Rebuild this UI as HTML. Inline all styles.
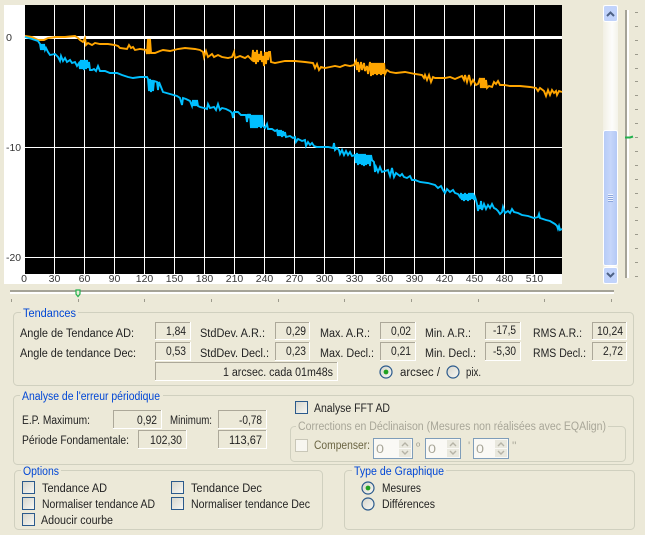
<!DOCTYPE html>
<html><head><meta charset="utf-8"><style>
html,body{margin:0;padding:0;background:#ECE9D8;width:645px;height:535px;overflow:hidden}
svg{display:block}
text{font-family:"Liberation Sans",sans-serif;font-size:11.5px;fill:#222;white-space:pre}
.l{fill:#0046D5}
.g{fill:#A8A698}
.a{font-size:10.5px;fill:#333}
.b{fill:none;stroke:#D0D0BF}
.c{fill:url(#cb);stroke:#2B5A8C}
.r{fill:url(#cb);stroke:#2B5A8C;stroke-width:1.2}
.t{stroke:#9c9a8c;fill:none}
</style></head><body>
<svg width="645" height="535" viewBox="0 0 645 535" xmlns="http://www.w3.org/2000/svg">
<defs>
<linearGradient id="cb" x1="0" y1="0" x2="1" y2="1"><stop offset="0" stop-color="#D6D5CB"/><stop offset="1" stop-color="#F8F8F4"/></linearGradient>
<linearGradient id="tr" x1="0" y1="0" x2="1" y2="0"><stop offset="0" stop-color="#F1EFE4"/><stop offset=".6" stop-color="#FDFDFB"/><stop offset="1" stop-color="#F4F3EA"/></linearGradient>
<linearGradient id="th" x1="0" y1="0" x2="1" y2="0"><stop offset="0" stop-color="#B6CBF7"/><stop offset=".5" stop-color="#C6D6FA"/><stop offset="1" stop-color="#B3C8F5"/></linearGradient>
</defs>
<rect width="645" height="535" fill="#ECE9D8"/>

<!-- chart -->
<rect x="4" y="5" width="558" height="279" fill="#fff"/>
<rect x="25" y="5" width="537" height="269" fill="#000"/>
<g stroke="#fff" shape-rendering="crispEdges">
<path d="M54.5 5V274M84.5 5V274M114.5 5V274M144.5 5V274M174.5 5V274M204.5 5V274M234.5 5V274M264.5 5V274M294.5 5V274M324.5 5V274M354.5 5V274M384.5 5V274M414.5 5V274M444.5 5V274M474.5 5V274M504.5 5V274M534.5 5V274"/>
<path d="M25 147.5H562M25 257.5H562"/>
<path d="M25 37.5H562" stroke-width="3"/>
</g>
<g fill="none" stroke-width="1.9" stroke-linejoin="miter">
<path stroke="#FFA500" d="M25 36L32 37L38 40L44 40L48 38L56 37L65 37L75 36L78 38L80 40L83 42L85 38L86 45L88 43L92 45L95 43L100 44L108 44L115 45L118 46L120 48L127 49L129 45L131 48L133 47L135 50L140 49L146 50L147 54L148 39L149 54L150 39L151 53L155 53L160 51L163 50L170 51L178 49L185 48L195 49L200 50L203 52L204 57L206 51L208 57L212 54L214 57L218 55L222 57L228 58L232 57L234 52L235 58L240 56L245 58L248 56L252 60L253 50L254 62L255 52L256 64L257 50L258 62L259 54L260 60L261 51L262 62L263 56L264 66L265 52L266 64L267 52L268 60L269 52L270 52L271 62L275 63L285 61L295 61L305 62L313 63L315 68L317 64L319 70L321 67L325 68L330 67L335 66L340 67L345 65L350 66L354 65L356 61L357 70L358 62L359 72L361 62L362 70L364 63L365 71L367 66L368 74L370 62L371 76L372 63L373 75L374 63L375 74L376 63L377 75L378 63L379 74L380 63L381 75L382 63L383 74L384 63L385 74L387 70L390 72L396 73L405 72L415 74L422 75L424 78L425 75L427 80L429 75L431 82L433 77L435 78L445 78L450 77L455 79L462 76L464 80L465 75L467 82L469 75L471 84L473 80L476 85L478 84L480 78L481 88L482 78L483 88L484 78L485 88L486 80L487 88L489 86L492 87L494 82L496 84L498 81L500 85L504 85L510 86L520 86L530 87L536 88L538 91L540 88L544 91L546 96L548 90L550 95L552 90L554 93L556 91L557 95L559 91L562 92"/>
<path stroke="#00BFFF" d="M25 37L32 39L38 41L40 44L41 50L42 44L43 50L44 44L45 50L46 48L48 52L50 55L55 54L58 57L60 61L61 56L63 61L65 58L67 62L70 60L72 63L75 62L77 66L79 63L80 69L81 60L82 69L83 60L84 70L85 60L86 69L87 60L88 68L89 62L90 70L92 70L94 69L96 71L98 66L100 71L105 71L110 73L117 73L122 75L128 77L133 78L140 77L147 77L148 79L149 91L150 79L151 92L152 80L153 91L154 81L157 82L158 90L159 82L161 87L163 92L170 94L177 96L180 98L182 105L183 98L186 99L190 101L192 106L193 100L194 106L195 100L196 106L197 100L198 106L200 107L204 108L207 109L208 104L210 108L214 107L216 110L218 104L220 110L222 108L226 109L230 111L232 113L233 118L234 112L238 112L241 115L244 115L246 115L247 122L248 114L249 118L250 114L251 128L252 115L253 128L254 115L255 128L256 115L257 128L258 115L259 127L260 115L261 128L262 115L263 126L265 128L267 124L268 129L272 129L275 131L277 130L278 136L279 130L280 136L281 130L282 137L283 131L284 136L285 132L286 137L290 136L293 138L295 137L296 142L298 139L302 141L305 140L306 146L308 142L310 145L312 143L314 146L317 147L322 147L328 147L333 148L334 143L335 150L337 148L339 150L340 154L342 150L344 155L346 151L348 155L350 152L352 156L355 155L356 163L357 153L358 165L359 154L360 164L361 154L362 165L363 154L364 166L365 154L366 165L367 155L368 164L369 155L370 166L371 155L372 160L374 162L375 172L376 167L378 172L380 167L382 172L385 171L388 170L390 176L392 168L394 177L396 173L400 176L402 174L404 177L407 178L410 176L412 180L415 180L420 182L428 183L435 185L438 188L441 186L443 190L445 193L447 189L450 192L453 190L455 193L458 194L460 197L461 193L462 200L463 194L464 201L465 193L466 200L467 194L468 201L469 193L470 200L471 193L472 199L473 193L474 200L475 197L476 200L477 204L478 211L479 205L480 209L481 201L482 210L484 204L486 209L488 205L490 208L492 204L494 208L496 209L498 211L500 214L502 212L503 207L505 213L508 211L510 213L512 209L514 212L518 213L522 215L528 216L534 218L538 217L539 214L540 218L546 220L550 221L555 224L557 226L558 229L559 226L560 230L562 229"/>
</g>

<text class="a" x="6" y="41" textLength="6" lengthAdjust="spacingAndGlyphs">0</text>
<text class="a" x="6" y="151" textLength="15" lengthAdjust="spacingAndGlyphs">-10</text>
<text class="a" x="6" y="261" textLength="15" lengthAdjust="spacingAndGlyphs">-20</text>
<g text-anchor="middle">
<text class="a" x="24" y="282">0</text><text class="a" x="54.5" y="282">30</text><text class="a" x="84.5" y="282">60</text><text class="a" x="114.5" y="282">90</text><text class="a" x="144.5" y="282">120</text><text class="a" x="174.5" y="282">150</text><text class="a" x="204.5" y="282">180</text><text class="a" x="234.5" y="282">210</text><text class="a" x="264.5" y="282">240</text><text class="a" x="294.5" y="282">270</text><text class="a" x="324.5" y="282">300</text><text class="a" x="354.5" y="282">330</text><text class="a" x="384.5" y="282">360</text><text class="a" x="414.5" y="282">390</text><text class="a" x="444.5" y="282">420</text><text class="a" x="474.5" y="282">450</text><text class="a" x="504.5" y="282">480</text><text class="a" x="534.5" y="282">510</text>
</g>

<!-- vertical scrollbar -->
<rect x="603" y="5" width="15" height="279" fill="url(#tr)"/>
<rect x="603.5" y="5.5" width="14" height="16" rx="2" fill="#C1D3FB" stroke="#fff"/>
<path d="M607 16L610.5 12.5L614 16" fill="none" stroke="#4D6185" stroke-width="2"/>
<rect x="603.5" y="130.5" width="14" height="135" rx="2" fill="url(#th)" stroke="#fff"/>
<path d="M608 194.5H613M608 196.5H613M608 198.5H613M608 200.5H613" stroke="#EEF3FE"/>
<path d="M608 195.5H613M608 197.5H613M608 199.5H613M608 201.5H613" stroke="#8CA6DC"/>
<rect x="603.5" y="267.5" width="14" height="16" rx="2" fill="#C1D3FB" stroke="#fff"/>
<path d="M607 273L610.5 276.5L614 273" fill="none" stroke="#4D6185" stroke-width="2"/>

<!-- vertical slider -->
<rect x="625" y="10" width="2" height="268" fill="#A5A397"/>
<rect x="627" y="10" width="2" height="268" fill="#fff"/>
<path d="M625 137.5H630L633 136.5" stroke="#21B14C" stroke-width="2" fill="none"/>
<path class="t" d="M635 12.5H638M635 26.5H638M635 40.5H638M635 54.5H638M635 68.5H638M635 81.5H638M635 95.5H638M635 109.5H638M635 123.5H638M635 137.5H638M635 151.5H638M635 165.5H638M635 179.5H638M635 193.5H638M635 207.5H638M635 220.5H638M635 234.5H638M635 248.5H638M635 262.5H638M635 276.5H638"/>

<!-- horizontal slider -->
<rect x="10" y="290" width="604" height="2" fill="#A5A397"/>
<rect x="10" y="292" width="604" height="2" fill="#fff"/>
<path d="M76 290H80V294L78 296.5L76 294Z" fill="#ECE9D8" stroke="#21B14C" stroke-width="1.2"/>
<path class="t" d="M11.5 299V302M78.5 299V302M144.5 299V302M211.5 299V302M278.5 299V302M344.5 299V302M411.5 299V302M478.5 299V302M544.5 299V302M611.5 299V302"/>

<!-- group boxes -->
<rect class="b" x="13.5" y="312.5" width="620" height="73" rx="4"/>
<rect class="b" x="13.5" y="395.5" width="620" height="69" rx="4"/>
<rect class="b" x="290.5" y="426.5" width="335" height="35" rx="4"/>
<rect class="b" x="14.5" y="470.5" width="308" height="59" rx="4"/>
<rect class="b" x="344.5" y="470.5" width="290" height="59" rx="4"/>
<g fill="#ECE9D8">
<rect x="21" y="306" width="57" height="12"/>
<rect x="20" y="389" width="143" height="12"/>
<rect x="296" y="421" width="312" height="12"/>
<rect x="21" y="465" width="40" height="12"/>
<rect x="352" y="465" width="94" height="12"/>
</g>
<text class="l" x="23" y="317" textLength="53" lengthAdjust="spacingAndGlyphs">Tendances</text>
<text class="l" x="22" y="400" textLength="138" lengthAdjust="spacingAndGlyphs">Analyse de l'erreur périodique</text>
<text class="l" x="23" y="475" textLength="36" lengthAdjust="spacingAndGlyphs">Options</text>
<text class="l" x="354" y="475" textLength="90" lengthAdjust="spacingAndGlyphs">Type de Graphique</text>
<text class="g" x="298" y="430" textLength="308" lengthAdjust="spacingAndGlyphs">Corrections en Déclinaison (Mesures non réalisées avec EQAlign)</text>

<!-- sunken fields -->
<g fill="none" shape-rendering="crispEdges">
<path stroke="#ACA899" d="M155.5 340V322.5H191M155.5 361V342.5H191M155.5 381V362.5H338M275.5 340V322.5H310M275.5 361V342.5H310M380.5 340V322.5H416M380.5 361V342.5H416M485.5 340V322.5H521M485.5 361V342.5H521M592.5 340V322.5H627M592.5 361V342.5H627M113.5 429V410.5H162M218.5 429V410.5H267M138.5 449V430.5H187M218.5 449V430.5H267"/>
<path stroke="#fff" d="M190.5 322V339.5H155M190.5 342V360.5H155M337.5 362V380.5H155M309.5 322V339.5H275M309.5 342V360.5H275M415.5 322V339.5H380M415.5 342V360.5H380M520.5 322V339.5H485M520.5 342V360.5H485M626.5 322V339.5H592M626.5 342V360.5H592M161.5 410V428.5H113M266.5 410V428.5H218M186.5 430V448.5H138M266.5 430V448.5H218"/>
</g>

<!-- Tendances -->
<text x="20" y="337" textLength="114" lengthAdjust="spacingAndGlyphs">Angle de Tendance AD:</text>
<text x="20" y="357" textLength="116" lengthAdjust="spacingAndGlyphs">Angle de tendance Dec:</text>
<text x="200" y="337" textLength="65" lengthAdjust="spacingAndGlyphs">StdDev. A.R.:</text>
<text x="200" y="357" textLength="69" lengthAdjust="spacingAndGlyphs">StdDev. Decl.:</text>
<text x="320" y="337" textLength="50" lengthAdjust="spacingAndGlyphs">Max. A.R.:</text>
<text x="320" y="357" textLength="54" lengthAdjust="spacingAndGlyphs">Max. Decl.:</text>
<text x="425" y="337" textLength="46" lengthAdjust="spacingAndGlyphs">Min. A.R.:</text>
<text x="425" y="357" textLength="51" lengthAdjust="spacingAndGlyphs">Min. Decl.:</text>
<text x="533" y="337" textLength="49" lengthAdjust="spacingAndGlyphs">RMS A.R.:</text>
<text x="533" y="357" textLength="53" lengthAdjust="spacingAndGlyphs">RMS Decl.:</text>
<text x="166" y="335" textLength="20" lengthAdjust="spacingAndGlyphs">1,84</text>
<text x="166" y="355" textLength="20" lengthAdjust="spacingAndGlyphs">0,53</text>
<text x="286" y="335" textLength="20" lengthAdjust="spacingAndGlyphs">0,29</text>
<text x="286" y="355" textLength="20" lengthAdjust="spacingAndGlyphs">0,23</text>
<text x="391" y="335" textLength="20" lengthAdjust="spacingAndGlyphs">0,02</text>
<text x="391" y="355" textLength="20" lengthAdjust="spacingAndGlyphs">0,21</text>
<text x="493" y="334" textLength="23" lengthAdjust="spacingAndGlyphs">-17,5</text>
<text x="493" y="355" textLength="23" lengthAdjust="spacingAndGlyphs">-5,30</text>
<text x="597" y="335" textLength="26" lengthAdjust="spacingAndGlyphs">10,24</text>
<text x="603" y="355" textLength="20" lengthAdjust="spacingAndGlyphs">2,72</text>
<text x="223" y="376" textLength="110" lengthAdjust="spacingAndGlyphs">1 arcsec. cada 01m48s</text>
<circle class="r" cx="386" cy="372" r="6"/><circle cx="386" cy="372" r="2.4" fill="#21A121"/>
<text x="400" y="376" textLength="40" lengthAdjust="spacingAndGlyphs">arcsec /</text>
<circle class="r" cx="453" cy="372" r="6"/>
<text x="466" y="376" textLength="15" lengthAdjust="spacingAndGlyphs">pix.</text>

<!-- Analyse -->
<text x="22" y="424" textLength="68" lengthAdjust="spacingAndGlyphs">E.P. Maximum:</text>
<text x="170" y="424" textLength="42" lengthAdjust="spacingAndGlyphs">Minimum:</text>
<text x="22" y="444" textLength="107" lengthAdjust="spacingAndGlyphs">Période Fondamentale:</text>
<text x="137" y="424" textLength="20" lengthAdjust="spacingAndGlyphs">0,92</text>
<text x="239" y="424" textLength="23" lengthAdjust="spacingAndGlyphs">-0,78</text>
<text x="150" y="444" textLength="32" lengthAdjust="spacingAndGlyphs">102,30</text>
<text x="229" y="444" textLength="33" lengthAdjust="spacingAndGlyphs">113,67</text>
<rect class="c" x="295.5" y="401.5" width="12" height="12"/>
<text x="314" y="412" textLength="76" lengthAdjust="spacingAndGlyphs">Analyse FFT AD</text>
<rect x="295.5" y="439.5" width="12" height="12" fill="#F7F6F0" stroke="#C9C7B8"/>
<text x="314" y="449" textLength="56" lengthAdjust="spacingAndGlyphs" style="fill:#6B6543">Compenser:</text>

<!-- spinners -->
<g shape-rendering="crispEdges">
<rect x="373.5" y="438.5" width="39" height="20" fill="#FAF9F5" stroke="#7F9DB9"/>
<rect x="425.5" y="438.5" width="35" height="20" fill="#FAF9F5" stroke="#7F9DB9"/>
<rect x="473.5" y="438.5" width="35" height="20" fill="#FAF9F5" stroke="#7F9DB9"/>
<rect x="399" y="440" width="12" height="8" fill="#E9E8DE"/><rect x="399" y="449" width="12" height="8" fill="#E9E8DE"/>
<rect x="447" y="440" width="12" height="8" fill="#E9E8DE"/><rect x="447" y="449" width="12" height="8" fill="#E9E8DE"/>
<rect x="495" y="440" width="12" height="8" fill="#E9E8DE"/><rect x="495" y="449" width="12" height="8" fill="#E9E8DE"/>
</g>
<path d="M402 446L405 443L408 446M402 451L405 454L408 451M450 446L453 443L456 446M450 451L453 454L456 451M498 446L501 443L504 446M498 451L501 454L504 451" fill="none" stroke="#B5B3A6" stroke-width="1.4"/>
<text class="g" x="376" y="453" textLength="8" lengthAdjust="spacingAndGlyphs">0</text>
<text class="g" x="428" y="453" textLength="8" lengthAdjust="spacingAndGlyphs">0</text>
<text class="g" x="476" y="453" textLength="8" lengthAdjust="spacingAndGlyphs">0</text>
<text class="g" x="416" y="450">º</text>
<text class="g" x="468" y="450">'</text>
<text class="g" x="512" y="450">''</text>

<!-- Options -->
<rect class="c" x="22.5" y="481.5" width="12" height="12"/>
<rect class="c" x="22.5" y="497.5" width="12" height="12"/>
<rect class="c" x="22.5" y="513.5" width="12" height="12"/>
<rect class="c" x="171.5" y="481.5" width="12" height="12"/>
<rect class="c" x="171.5" y="497.5" width="12" height="12"/>
<text x="42" y="492" textLength="65" lengthAdjust="spacingAndGlyphs">Tendance AD</text>
<text x="42" y="508" textLength="113" lengthAdjust="spacingAndGlyphs">Normaliser tendance AD</text>
<text x="41" y="524" textLength="72" lengthAdjust="spacingAndGlyphs">Adoucir courbe</text>
<text x="191" y="492" textLength="71" lengthAdjust="spacingAndGlyphs">Tendance Dec</text>
<text x="191" y="508" textLength="119" lengthAdjust="spacingAndGlyphs">Normaliser tendance Dec</text>

<!-- Type -->
<circle class="r" cx="368" cy="488" r="6"/><circle cx="368" cy="488" r="2.4" fill="#21A121"/>
<circle class="r" cx="368" cy="504" r="6"/>
<text x="382" y="492" textLength="39" lengthAdjust="spacingAndGlyphs">Mesures</text>
<text x="382" y="508" textLength="53" lengthAdjust="spacingAndGlyphs">Différences</text>
</svg>
</body></html>
